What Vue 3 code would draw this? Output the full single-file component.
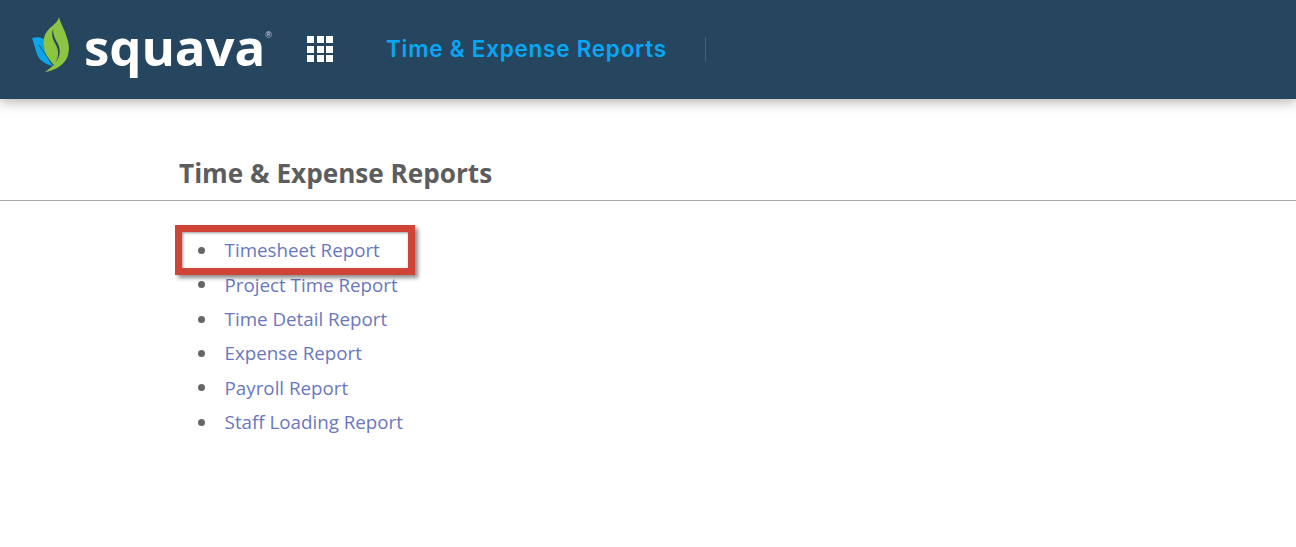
<script setup>
const reports = ['Timesheet Report', 'Project Time Report', 'Time Detail Report', 'Expense Report', 'Payroll Report', 'Staff Loading Report']
</script>

<template>
  <div class="page">
    <header class="bar">
      <div class="brand">
        <svg class="leaf" width="42" height="58" viewBox="0 0 42 58">
          <path d="M1 22 C5 21 9 21 13 23 C12 32 15 42 22 50 C14 48 8 44 6 38 C4 33 3 27 1 22Z" fill="#0ba5ea" />
          <path d="M28 1 C27 6 22 9 18 13 C13 18 12 24 13 31 C14 39 18 45 23 49 L14 56 C22 55 32 50 36 42 C40 33 37 24 34 16 C32 11 29 6 28 1Z" fill="#8cc541" />
          <path d="M22 13 C20 19 22 24 25 29 C28 35 28 41 24 47 C29 41 30 35 27 28 C24 23 22 19 22 13Z" fill="#26455f" />
          <path d="M8 29 C11 34 15 39 22 49" stroke="#26455f" stroke-width=".8" fill="none" />
        </svg>
        <span class="word">squava</span><span class="reg">®</span>
      </div>
      <div class="grid-icon">
        <i v-for="n in 9" :key="n"></i>
      </div>
      <span class="app-title">Time &amp; Expense Reports</span>
      <span class="sep"></span>
    </header>
    <main class="content">
      <h1 class="heading">Time &amp; Expense Reports</h1>
      <ul class="list">
        <li v-for="r in reports" :key="r"><a>{{ r }}</a></li>
      </ul>
      <div class="callout"></div>
    </main>
  </div>
</template>

<style>
html, body { margin: 0; background: #fff; }
</style>

<style scoped>
.page { width: 1296px; height: 547px; overflow: hidden; background: #fff; }
.bar {
  height: 99px; box-sizing: border-box; background: #26455f;
  display: flex; align-items: center; padding: 0 0 0 31px;
  box-shadow: 0 3px 12px rgba(0, 0, 0, .3); position: relative;
}
.brand { display: flex; align-items: flex-start; width: 276px; height: 62px; margin-top: -2px; }
.leaf { flex: none; margin-top: -2px; }
.word {
  font: 750 51px/50px "Open Sans", sans-serif; color: #fff; letter-spacing: -.1px;
  margin-left: 11px; margin-top: 3px;
}
.reg { font: 400 9px/9px "Liberation Sans", sans-serif; color: #d5dde3; margin-top: 13px; }
.grid-icon {
  display: grid; grid-template-columns: repeat(3, 7px); grid-auto-rows: 7px; gap: 2.500px;
  margin-right: 53px; margin-top: -1px;
}
.grid-icon i { background: #fff; display: block; }
.app-title { font: 600 22.500px/28px Inter, sans-serif; letter-spacing: .75px; color: #08a7f5; width: 319px; margin-top: -1px; white-space: nowrap; }
.sep { width: 1px; height: 25px; background: #3f6483; margin-top: -1px; }
.content { position: relative; }
.heading {
  margin: 0; padding: 57px 0 9px 179px; height: 35px;
  font: 700 26.150px/35px "Open Sans", sans-serif; color: #5d5d5d;
  border-bottom: 1px solid #a9a9a9;
}
.list { margin: 0; padding: 32.100px 0 0 198px; list-style: none; }
.list li {
  font: 400 18.750px/34.400px "Open Sans", sans-serif;
  display: flex; align-items: center; gap: 19.600px;
}
.list li::before { content: ""; width: 7px; height: 7px; border-radius: 50%; background: #666; flex: none; }
.list a { color: #6a77bd; }
.callout {
  position: absolute; left: 175px; top: 126px; width: 226px; height: 36px;
  border: 7px solid #d04437; box-shadow: 3px 3px 4px rgba(0, 0, 0, .45), inset 1px 1px 3px rgba(0, 0, 0, .4);
}
</style>
